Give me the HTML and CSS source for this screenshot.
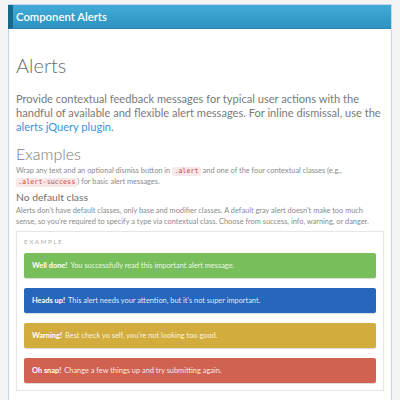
FILE: index.html
```html
<!DOCTYPE html>
<html>
<head>
<meta charset="utf-8">
<link rel="stylesheet" href="styles.css">
</head>
<body>
<div class="panel">
  <div class="panel-header">Component Alerts</div>
  <div class="panel-body">
    <h1 class="title">Alerts</h1>
    <p class="lead">Provide contextual feedback messages for typical user actions with the handful of available and flexible alert messages. For inline dismissal, use the <a class="link">alerts jQuery plugin</a>.</p>
    <h2 class="subtitle">Examples</h2>
    <p class="small">Wrap any text and an optional dismiss button in <code class="code">.alert</code> and one of the four contextual classes (e.g., <code class="code">.alert-success</code>) for basic alert messages.</p>
    <h3 class="minor">No default class</h3>
    <p class="small">Alerts don't have default classes, only base and modifier classes. A default gray alert doesn't make too much sense, so you're required to specify a type via contextual class. Choose from success, info, warning, or danger.</p>
    <div class="example">
      <div class="example-label">EXAMPLE</div>
      <div class="alert success"><strong>Well done!</strong> You successfully read this important alert message.</div>
      <div class="alert info"><strong>Heads up!</strong> This alert needs your attention, but it's not super important.</div>
      <div class="alert warning"><strong>Warning!</strong> Best check yo self, you're not looking too good.</div>
      <div class="alert danger"><strong>Oh snap!</strong> Change a few things up and try submitting again.</div>
    </div>
  </div>
</div>
</body>
</html>
```
FILE: styles.css
```css
html, body {
  margin: 0;
  padding: 0;
  background: #f4f4f4;
  font-family: Lato, "Noto Sans", sans-serif;
}
.panel {
  margin: 4px 8px 0 8px;
  background: #ffffff;
  border: 1px solid #c2d7ee;
  border-bottom: none;
  min-height: 400px;
}
.panel-header {
  height: 23px;
  line-height: 23px;
  margin-left: -1px;
  padding-left: 3px;
  border-left: 5px solid #17698a;
  background: linear-gradient(#43abd8, #2d93c1);
  border-bottom: 1px solid #2a86b0;
  color: #ffffff;
  font-size: 11.3px;
  font-weight: 600;
}
.panel-body {
  padding: 0 7px;
}
.title {
  margin: 24px 0 0 0;
  font-size: 20px;
  line-height: 24px;
  font-weight: 300;
  color: #6d6d6d;
}
.lead {
  margin: 15px 0 0 0;
  font-size: 11.1px;
  line-height: 14px;
  color: #7a7a7a;
}
.link {
  color: #3b93db;
}
.subtitle {
  margin: 10px 0 0 0;
  font-size: 16px;
  line-height: 20px;
  font-weight: 300;
  color: #7a7a7a;
}
.small {
  margin: 1px 0 0 0;
  font-size: 7.4px;
  line-height: 11px;
  color: #8a8a8a;
}
.code {
  font-family: "DejaVu Sans Mono", monospace;
  font-size: 6.8px;
  line-height: 9px;
  background: #f9e8e8;
  color: #c9443f;
  padding: 0 2px;
  border-radius: 2px;
  white-space: nowrap;
  display: inline-block;
}
.minor {
  margin: 4px 0 0 0;
  font-size: 10.3px;
  line-height: 13px;
  font-weight: 400;
  color: #6f6f6f;
}
.example {
  margin-top: 4px;
  border: 1px solid #e6e6e6;
  padding: 7px 7px 7px 7px;
  display: flex;
  flex-direction: column;
  gap: 10px;
}
.example-label {
  font-size: 6.5px;
  letter-spacing: 1.4px;
  color: #b0b0b0;
  line-height: 6px;
  margin-bottom: -2px;
}
.alert {
  height: 25px;
  box-sizing: border-box;
  padding-left: 8px;
  display: flex;
  align-items: center;
  font-size: 7.4px;
  color: rgba(255,255,255,0.88);
  border-radius: 2px;
  box-shadow: 0 1px 1px rgba(0,0,0,0.15);
}
.alert strong {
  color: #ffffff;
  margin-right: 3px;
}
.success { background: #78bf5c; }
.info { background: #2767bb; }
.warning { background: #d3ac3e; }
.danger { background: #d16252; }
```
